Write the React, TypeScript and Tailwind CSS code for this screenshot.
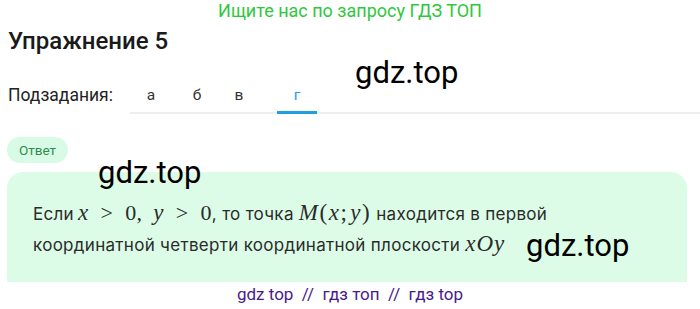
import React from "react";

const serif = { fontFamily: '"Liberation Serif", "DejaVu Serif", serif' };
const M = ({ children, className = "" }: { children: React.ReactNode; className?: string }) => (
  <span className={`italic ${className}`} style={serif}>
    {children}
  </span>
);
const R = ({ children, className = "" }: { children: React.ReactNode; className?: string }) => (
  <span className={className} style={serif}>
    {children}
  </span>
);

export default function App() {
  const tabs = [
    { t: "а", ml: "ml-[1px]", active: false },
    { t: "б", ml: "ml-[6px]", active: false },
    { t: "в", ml: "ml-[2px]", active: false },
    { t: "г", ml: "ml-[18px]", active: true },
  ];
  return (
    <div className="relative w-[700px] h-[309px] overflow-hidden bg-white font-['Roboto',sans-serif]">
      <div className="text-center text-[18px] leading-[22px] text-[#2ec83c]">Ищите нас по запросу ГДЗ ТОП</div>
      <h1 className="mt-[5px] ml-[8px] text-[24px] leading-[28px] font-medium text-[#1a1a1a]">Упражнение 5</h1>
      <div className="mt-[28px] flex items-start">
        <div className="ml-[8px] w-[122px] text-[17.5px] leading-6 text-[#222]">Подзадания:</div>
        <div className="flex flex-1 border-b-2 border-[#eceef0]">
          {tabs.map((x) => (
            <div
              key={x.t}
              className={`${x.ml} -mb-[2px] flex h-[31px] w-[40px] justify-center border-b-[3px] text-[15.5px] leading-6 ${
                x.active ? "border-[#1ea0e0] text-[#1ea0e0]" : "border-transparent text-[#333]"
              }`}
            >
              {x.t}
            </div>
          ))}
        </div>
      </div>
      <div className="mt-[23px] ml-[7px] flex h-[26px] w-[61px] items-center justify-center rounded-full bg-[#d8fbe5] text-[13.5px] text-[#2f8a4f]">
        Ответ
      </div>
      <div className="mt-[9px] ml-[7px] w-[680px] h-[110px] rounded-t-[16px] bg-[#dcfce7] pl-[26px] pt-[25px] font-['Inter',sans-serif] text-[17px] tracking-[0.3px] leading-[30px] text-[#2b2b2b]">
        <div className="whitespace-nowrap">
          Если<M className="ml-[4px] text-[23px]">x</M>
          <R className="mx-[12px] text-[22px]">&gt;</R>
          <R className="text-[22px]">0,</R>
          <M className="ml-[11px] text-[23px]">y</M>
          <R className="mx-[12px] text-[22px]">&gt;</R>
          <R className="text-[22px]">0</R>
          , то точка{" "}
          <span className="text-[23px] tracking-[1.5px]">
            <M>M</M>
            <R>(</R>
            <M>x</M>
            <R>;</R>
            <M className="ml-[2px]">y</M>
            <R>)</R>
          </span>{" "}
          находится в первой
        </div>
        <div className="whitespace-nowrap">
          координатной четверти координатной плоскости{" "}
          <M className="text-[23px] tracking-[1px]">xOy</M>
        </div>
      </div>
      <div className="mt-[2px] text-center text-[17px] leading-5 text-[#4a1a8a]">gdz top&nbsp; //&nbsp; гдз топ&nbsp; //&nbsp; гдз top</div>

      <div className="absolute left-[355px] top-[57px] text-[31px] leading-none text-black">gdz.top</div>
      <div className="absolute left-[98px] top-[157px] text-[31px] leading-none text-black">gdz.top</div>
      <div className="absolute left-[526px] top-[230px] text-[31px] leading-none text-black">gdz.top</div>
    </div>
  );
}
